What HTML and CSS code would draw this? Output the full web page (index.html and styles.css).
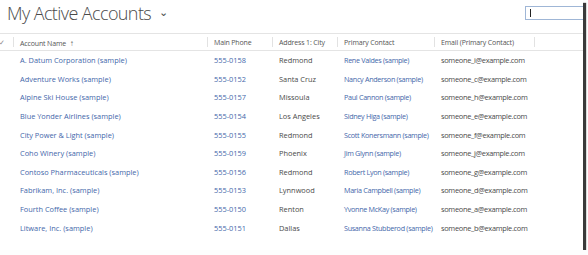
FILE: index.html
```html
<!DOCTYPE html>
<html lang="en">

<head>
    <meta charset="UTF-8">
    <title>My Active Accounts</title>
    <link rel="stylesheet" href="styles.css">
</head>

<body>

    <div class="frame">
        <div class="topbar">
            <h1 class="view-title">My Active Accounts <span class="chev">&#8964;</span></h1>
            <div class="search"><span class="caret"></span></div>
        </div><!--topbar end-->

        <table class="grid">
            <colgroup>
                <col class="c-check">
                <col class="c-name">
                <col class="c-phone">
                <col class="c-city">
                <col class="c-contact">
                <col class="c-email">
                <col class="c-rest">
            </colgroup>
            <thead>
                <tr>
                    <th class="check">&#10003;</th>
                    <th>Account Name <span class="arrow">&#8593;</span></th>
                    <th>Main Phone</th>
                    <th>Address 1: City</th>
                    <th>Primary Contact</th>
                    <th>Email (Primary Contact)</th>
                    <th></th>
                </tr>
            </thead>
            <tbody>
                <tr><td></td><td><a href="#">A. Datum Corporation (sample)</a></td><td><a href="#">555-0158</a></td><td>Redmond</td><td class="contact"><a href="#">Rene Valdes (sample)</a></td><td class="email">someone_i@example.com</td><td></td></tr>
                <tr><td></td><td><a href="#">Adventure Works (sample)</a></td><td><a href="#">555-0152</a></td><td>Santa Cruz</td><td class="contact"><a href="#">Nancy Anderson (sample)</a></td><td class="email">someone_c@example.com</td><td></td></tr>
                <tr><td></td><td><a href="#">Alpine Ski House (sample)</a></td><td><a href="#">555-0157</a></td><td>Missoula</td><td class="contact"><a href="#">Paul Cannon (sample)</a></td><td class="email">someone_h@example.com</td><td></td></tr>
                <tr><td></td><td><a href="#">Blue Yonder Airlines (sample)</a></td><td><a href="#">555-0154</a></td><td>Los Angeles</td><td class="contact"><a href="#">Sidney Higa (sample)</a></td><td class="email">someone_e@example.com</td><td></td></tr>
                <tr><td></td><td><a href="#">City Power &amp; Light (sample)</a></td><td><a href="#">555-0155</a></td><td>Redmond</td><td class="contact"><a href="#">Scott Konersmann (sample)</a></td><td class="email">someone_f@example.com</td><td></td></tr>
                <tr><td></td><td><a href="#">Coho Winery (sample)</a></td><td><a href="#">555-0159</a></td><td>Phoenix</td><td class="contact"><a href="#">Jim Glynn (sample)</a></td><td class="email">someone_j@example.com</td><td></td></tr>
                <tr><td></td><td><a href="#">Contoso Pharmaceuticals (sample)</a></td><td><a href="#">555-0156</a></td><td>Redmond</td><td class="contact"><a href="#">Robert Lyon (sample)</a></td><td class="email">someone_g@example.com</td><td></td></tr>
                <tr><td></td><td><a href="#">Fabrikam, Inc. (sample)</a></td><td><a href="#">555-0153</a></td><td>Lynnwood</td><td class="contact"><a href="#">Maria Campbell (sample)</a></td><td class="email">someone_d@example.com</td><td></td></tr>
                <tr><td></td><td><a href="#">Fourth Coffee (sample)</a></td><td><a href="#">555-0150</a></td><td>Renton</td><td class="contact"><a href="#">Yvonne McKay (sample)</a></td><td class="email">someone_a@example.com</td><td></td></tr>
                <tr><td></td><td><a href="#">Litware, Inc. (sample)</a></td><td><a href="#">555-0151</a></td><td>Dallas</td><td class="contact"><a href="#">Susanna Stubberod (sample)</a></td><td class="email">someone_b@example.com</td><td></td></tr>
            </tbody>
        </table>
    </div><!--frame end-->

</body>

</html>
```

FILE: styles.css
```css
body {
    margin: 0;
    background-color: #fdfdfd;
    font-family: 'Open Sans', 'Noto Sans', sans-serif;
}

.frame {
    width: 583px;
    height: 250px;
    background-color: #fff;
    box-shadow: 3px 3px 1px #3a3a3a;
    overflow: hidden;
}

.topbar {
    display: flex;
    justify-content: space-between;
    align-items: flex-start;
    height: 33px;
    border-bottom: 1px solid #e4e4e4;
}

.view-title {
    margin: 0;
    padding: 0 0 0 7px;
    font-size: 18px;
    font-weight: 300;
    letter-spacing: -0.6px;
    line-height: 24px;
    color: #4a4a4a;
}

.chev {
    font-size: 11px;
    vertical-align: 4px;
    margin-left: 4px;
}

.search {
    width: 57px;
    height: 12px;
    margin-top: 6px;
    border: 1px solid #9fb6d6;
    border-right: none;
    position: relative;
}

.caret {
    position: absolute;
    left: 4px;
    top: 2px;
    width: 1px;
    height: 8px;
    background-color: #222;
}

.grid {
    border-collapse: collapse;
    table-layout: fixed;
    width: 583px;
    font-size: 7.4px;
}

.c-check { width: 13px; }
.c-name { width: 194px; }
.c-phone { width: 65px; }
.c-city { width: 65px; }
.c-contact { width: 97px; }
.c-email { width: 100px; }
.c-rest { width: 49px; }

.grid th {
    height: 16px;
    padding: 0 0 0 7px;
    text-align: left;
    font-size: 7px;
    font-weight: 400;
    letter-spacing: -0.15px;
    color: #555;
    border-bottom: 1px solid #e4e4e4;
    position: relative;
    white-space: nowrap;
}

.grid th + th::before {
    content: "";
    position: absolute;
    left: 0;
    top: 3px;
    height: 10px;
    border-left: 1px solid #e2e2e2;
}

.grid th.check {
    padding: 0;
    text-indent: -1px;
    color: #888;
}

.arrow {
    margin-left: 2px;
    font-size: 8px;
    color: #555;
}

.grid td {
    height: 18.6px;
    padding: 0 0 0 7px;
    color: #4a4a4a;
    white-space: nowrap;
    overflow: hidden;
}

.grid td.contact {
    font-size: 7.2px;
    letter-spacing: -0.3px;
}

.grid td.email {
    letter-spacing: -0.3px;
}

.grid a {
    color: #4467aa;
    text-decoration: none;
}
```
